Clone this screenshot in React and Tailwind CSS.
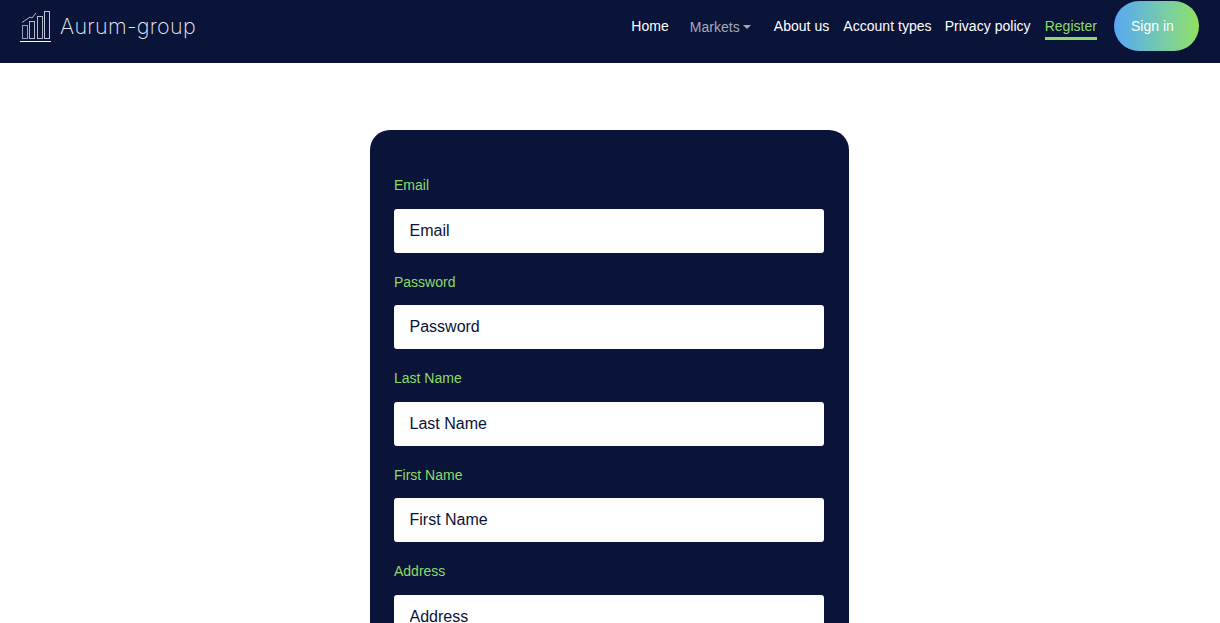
import React from "react";

const navy = "bg-[#0a1338]";
const fields = ["Email", "Password", "Last Name", "First Name", "Address"];

function Logo() {
  return (
    <svg width="32" height="32" viewBox="0 0 32 32" fill="none" stroke="#d5d8e2" strokeWidth="1" className="shrink-0">
      <rect x="2.5" y="14.5" width="5" height="13" stroke="#9aa0b5" />
      <rect x="9.5" y="10.5" width="5" height="17" stroke="#b4b9c9" />
      <rect x="17.5" y="5.5" width="5" height="22" stroke="#b4b9c9" />
      <rect x="24.5" y="0.5" width="5" height="27" stroke="#c4c8d5" />
      <path d="M2 11.5 L10 6 L12 7 L16 2" stroke="#b4b9c9" />
      <path d="M0 30.5 H31" stroke="#ffffff" />
    </svg>
  );
}

function NavLink({ children, className = "" }) {
  return <a className={"text-[14px] tracking-[0.03px] leading-[22px] text-white whitespace-nowrap " + className}>{children}</a>;
}

export default function App() {
  return (
    <div className="h-screen overflow-hidden bg-white font-['Liberation_Sans',Arial,sans-serif]">
      <nav className={"h-[63px] flex items-start justify-between pl-[20px] pr-[21px] " + navy}>
        <div className="flex items-center gap-[8px] pt-[11px]">
          <Logo />
          <span className="font-['Inter',sans-serif] font-extralight text-[21.5px] leading-[30px] tracking-[0.3px] text-[#e9ebf1] -mt-[3px]">Aurum-group</span>
        </div>
        <div className="flex items-start">
          <NavLink className="mt-[15px]">Home</NavLink>
          <a className="ml-[21px] mt-[16px] flex items-center text-[14px] tracking-[0.03px] leading-[22px] text-[#a6a9b8] whitespace-nowrap">
            Markets
            <span className="ml-[3px] w-0 h-0 border-x-[4px] border-x-transparent border-t-[4px] border-t-[#a6a9b8]"></span>
          </a>
          <NavLink className="ml-[23px] mt-[15px]">About us</NavLink>
          <NavLink className="ml-[14px] mt-[15px]">Account types</NavLink>
          <NavLink className="ml-[13px] mt-[15px]">Privacy policy</NavLink>
          <a className="ml-[14px] mt-[15px] text-[14px] tracking-[0.03px] leading-[22px] text-[#8ddc68] border-b-[3px] border-[#8ddc68] pb-[0px] whitespace-nowrap">Register</a>
          <button className="ml-[17px] mt-[1px] w-[85px] h-[50px] rounded-[25px] pl-[17px] text-left bg-gradient-to-r from-[#5aa6f2] to-[#92e05c] text-white text-[14px]">Sign in</button>
        </div>
      </nav>
      <main className="flex justify-center pt-[67px] pr-[2px]">
        <form className={"w-[479px] rounded-[20px] px-[24.5px] pt-[45px] pb-6 " + navy}>
          {fields.map((f) => (
            <div key={f} className="mb-[18.75px]">
              <label className="block text-[14px] leading-[21px] text-[#8ddc68] mb-[12.75px]">{f}</label>
              <input
                readOnly
                placeholder={f}
                className="block w-full h-[44px] rounded-[3px] bg-white px-[15.5px] text-[16px] text-[#0a1338] placeholder:text-[#0a1338] outline-none"
              />
            </div>
          ))}
        </form>
      </main>
    </div>
  );
}
